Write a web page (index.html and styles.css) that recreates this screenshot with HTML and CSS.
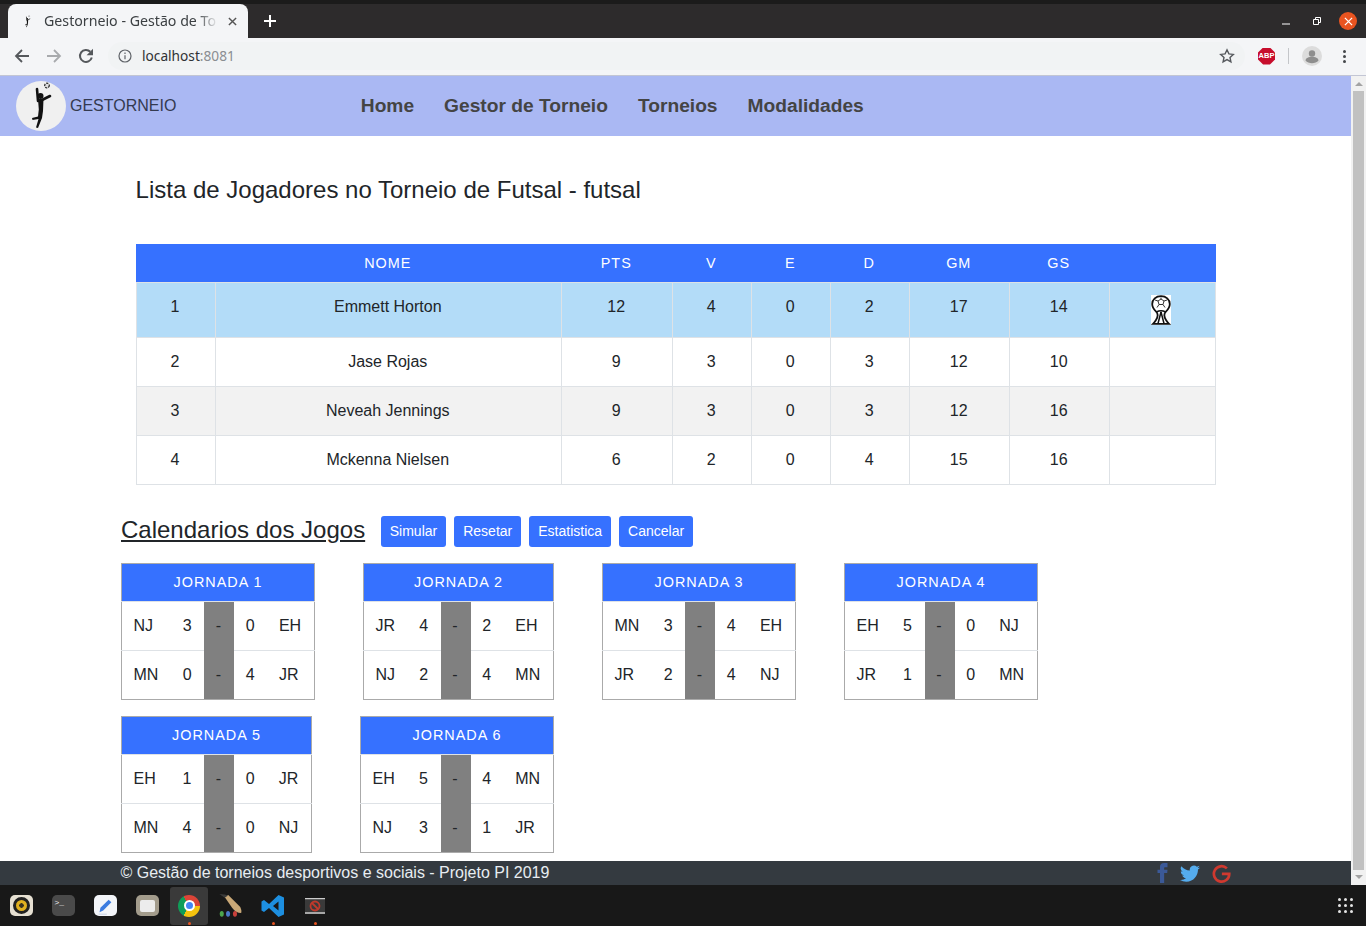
FILE: index.html
```html
<!DOCTYPE html>
<html>
<head>
    <title>Gestorneio - Gestão de Torneios</title>
    <link rel="stylesheet" href="styles.css">
</head>
<body>
    <!-- browser window -->
    <div class="tab-bar">
        <div class="tab">
            <svg class="favicon" viewBox="0 0 50 50"><use href="#player"/></svg>
            <span class="tab-title">Gestorneio - Gestão de To</span>
            <svg class="tab-close" viewBox="0 0 10 10"><path d="M1 1l8 8M9 1l-8 8"/></svg>
        </div>
        <svg class="new-tab" viewBox="0 0 12 12"><path d="M6 0v12M0 6h12"/></svg>
        <div class="window-controls">
            <svg class="win-icon" viewBox="0 0 10 10"><path d="M1 8h8"/></svg>
            <svg class="win-icon" viewBox="0 0 10 10"><path d="M1.500 3.500h5v5h-5zM3.500 3V1.500h5v5H7"/></svg>
            <span class="win-close"><svg viewBox="0 0 10 10"><path d="M1 1l8 8M9 1l-8 8"/></svg></span>
        </div>
    </div>
    <div class="toolbar">
        <svg class="nav-icon" viewBox="0 0 16 16"><path d="M15 8H2M8 2L2 8l6 6"/></svg>
        <svg class="nav-icon off" viewBox="0 0 16 16"><path d="M1 8h13M8 2l6 6-6 6"/></svg>
        <svg class="nav-icon reload" viewBox="0 0 16 16"><path d="M13.800 9.500A6 6 0 1 1 12.300 3.700"/><path class="solid" d="M15 .8v6.400H8.600z"/></svg>
        <div class="address">
            <svg class="info-icon" viewBox="0 0 14 14"><circle cx="7" cy="7" r="6"/><path d="M7 6.200v4M7 3.500v1.500"/></svg>
            <span class="host">localhost<span class="port">:8081</span></span>
            <svg class="star" viewBox="0 0 16 16"><path d="M8 1.800l1.900 4.100 4.400.5-3.300 3 .9 4.400L8 11.600l-3.900 2.200.9-4.400-3.300-3 4.400-.5z"/></svg>
        </div>
        <div class="abp"><span>ABP</span></div>
        <div class="tool-sep"></div>
        <svg class="avatar" viewBox="0 0 20 20"><circle cx="10" cy="10" r="10" fill="#dcdcdc"/><circle cx="10" cy="7.500" r="3.200" fill="#8e8e8e"/><path d="M3.500 14.500c0-2.600 3.500-3.800 6.500-3.800s6.500 1.200 6.500 3.800c-1.500 1.800-4 2.800-6.500 2.800s-5-1-6.500-2.800z" fill="#8e8e8e"/></svg>
        <div class="menu-dots"><i></i><i></i><i></i></div>
    </div>

    <div class="viewport">
        <div class="page">
            <nav class="navbar">
                <div class="logo">
                    <svg viewBox="0 0 50 50">
                        <defs>
                            <g id="player">
                                <circle cx="31" cy="4.500" r="2.300" fill="#ddd" stroke="#222" stroke-width="1.200" stroke-dasharray="2 1"/>
                                <path d="M21 8l1 12M34 15l-9 4.500" stroke="#111" stroke-width="2.600" fill="none" stroke-linecap="round"/>
                                <circle cx="24.500" cy="15" r="3" fill="#111"/>
                                <path d="M22 18h5.500l-.5 12-1 7-4 10-2-.5 2.500-8.500-6 1-.5-2 6-1.500.8-7z" fill="#111"/>
                            </g>
                        </defs>
                        <use href="#player"/>
                    </svg>
                </div>
                <span class="brand">GESTORNEIO</span>
                <div class="nav-links">
                    <a href="#">Home</a>
                    <a href="#">Gestor de Torneio</a>
                    <a href="#">Torneios</a>
                    <a href="#">Modalidades</a>
                </div>
            </nav>

            <main class="content">
                <h1 class="page-title">Lista de Jogadores no Torneio de Futsal - futsal</h1>

                <table class="standings">
                    <colgroup>
                        <col class="c-pos"><col class="c-name"><col class="c-pts"><col class="c-num"><col class="c-num"><col class="c-num"><col class="c-goal"><col class="c-goal"><col class="c-cup">
                    </colgroup>
                    <thead>
                        <tr><th></th><th>NOME</th><th>PTS</th><th>V</th><th>E</th><th>D</th><th>GM</th><th>GS</th><th></th></tr>
                    </thead>
                    <tbody>
                        <tr class="winner">
                            <td>1</td><td>Emmett Horton</td><td>12</td><td>4</td><td>0</td><td>2</td><td>17</td><td>14</td>
                            <td>
                                <svg class="trophy" viewBox="0 0 20 30">
                                    <rect width="20" height="30" fill="#fff"/>
                                    <path d="M10 1.200C5 1.200 1.200 4.500 1.200 9c0 4 2.300 6 4.300 8 1.500 2 1.500 5-.5 8-1 1.600-2 2.800-3 3.800h16c-1-1-2-2.200-3-3.800-2-3-2-6-.5-8 2-2 4.300-4 4.300-8 0-4.500-3.800-7.800-8.800-7.800z" fill="#fff" stroke="#111" stroke-width="1.800"/>
                                    <path d="M10 4l3 2-1 3.500H8L7 6zM10 4V2.500M13 6l3-1M12 9.500l2 3M8 9.500l-2 3M7 6L4 5" fill="none" stroke="#333" stroke-width="1"/>
                                    <path d="M5.500 17c2.500-1.500 6.500-1.500 9 0M10 17l-3 11.500M10 17l3 11.500" fill="none" stroke="#111" stroke-width="1.500"/>
                                </svg>
                            </td>
                        </tr>
                        <tr><td>2</td><td>Jase Rojas</td><td>9</td><td>3</td><td>0</td><td>3</td><td>12</td><td>10</td><td></td></tr>
                        <tr class="striped"><td>3</td><td>Neveah Jennings</td><td>9</td><td>3</td><td>0</td><td>3</td><td>12</td><td>16</td><td></td></tr>
                        <tr><td>4</td><td>Mckenna Nielsen</td><td>6</td><td>2</td><td>0</td><td>4</td><td>15</td><td>16</td><td></td></tr>
                    </tbody>
                </table>

                <div class="games-head">
                    <h2>Calendarios dos Jogos</h2>
                    <button>Simular</button>
                    <button>Resetar</button>
                    <button>Estatistica</button>
                    <button>Cancelar</button>
                </div>

                <div class="rounds">
                    <div class="round-row">
                        <table class="round">
                            <tr><th colspan="5">JORNADA 1</th></tr>
                            <tr><td>NJ</td><td>3</td><td class="dash">-</td><td>0</td><td>EH</td></tr>
                            <tr><td>MN</td><td>0</td><td class="dash">-</td><td>4</td><td>JR</td></tr>
                        </table>
                        <table class="round narrow">
                            <tr><th colspan="5">JORNADA 2</th></tr>
                            <tr><td>JR</td><td>4</td><td class="dash">-</td><td>2</td><td>EH</td></tr>
                            <tr><td>NJ</td><td>2</td><td class="dash">-</td><td>4</td><td>MN</td></tr>
                        </table>
                        <table class="round">
                            <tr><th colspan="5">JORNADA 3</th></tr>
                            <tr><td>MN</td><td>3</td><td class="dash">-</td><td>4</td><td>EH</td></tr>
                            <tr><td>JR</td><td>2</td><td class="dash">-</td><td>4</td><td>NJ</td></tr>
                        </table>
                        <table class="round">
                            <tr><th colspan="5">JORNADA 4</th></tr>
                            <tr><td>EH</td><td>5</td><td class="dash">-</td><td>0</td><td>NJ</td></tr>
                            <tr><td>JR</td><td>1</td><td class="dash">-</td><td>0</td><td>MN</td></tr>
                        </table>
                    </div>
                    <div class="round-row">
                        <table class="round narrow">
                            <tr><th colspan="5">JORNADA 5</th></tr>
                            <tr><td>EH</td><td>1</td><td class="dash">-</td><td>0</td><td>JR</td></tr>
                            <tr><td>MN</td><td>4</td><td class="dash">-</td><td>0</td><td>NJ</td></tr>
                        </table>
                        <table class="round">
                            <tr><th colspan="5">JORNADA 6</th></tr>
                            <tr><td>EH</td><td>5</td><td class="dash">-</td><td>4</td><td>MN</td></tr>
                            <tr><td>NJ</td><td>3</td><td class="dash">-</td><td>1</td><td>JR</td></tr>
                        </table>
                    </div>
                </div>
            </main>

            <footer class="footer">
                <span>© Gestão de torneios desportivos e sociais - Projeto PI 2019</span>
                <div class="social">
                    <svg class="fb" viewBox="6 0 12 24"><path d="M9 8H6v4h3v12h5V12h3.642L18 8h-4V6.333C14 5.378 14.192 5 15.115 5H18V0h-3.808C10.596 0 9 1.583 9 4.615V8z"/></svg>
                    <svg class="tw" viewBox="0 0 16 16"><path d="M5.026 15c6.038 0 9.341-5.003 9.341-9.334 0-.14 0-.282-.006-.422A6.685 6.685 0 0 0 16 3.542a6.658 6.658 0 0 1-1.889.518 3.301 3.301 0 0 0 1.447-1.817 6.533 6.533 0 0 1-2.087.793A3.286 3.286 0 0 0 7.875 6.030a9.325 9.325 0 0 1-6.767-3.429 3.289 3.289 0 0 0 1.018 4.382A3.323 3.323 0 0 1 .64 6.575v.045a3.288 3.288 0 0 0 2.632 3.218 3.203 3.203 0 0 1-.865.115 3.230 3.230 0 0 1-.614-.057 3.283 3.283 0 0 0 3.067 2.277A6.588 6.588 0 0 1 .78 13.580a6.320 6.320 0 0 1-.78-.045A9.344 9.344 0 0 0 5.026 15z"/></svg>
                    <svg class="gp" viewBox="0 0 24 24"><path d="M18.800 5.500A9.700 9.700 0 1 0 21.800 12.500H12.500"/></svg>
                </div>
            </footer>
        </div>
        <div class="scrollbar">
            <span class="arrow up"></span>
            <div class="thumb"></div>
            <span class="arrow down"></span>
        </div>
    </div>

    <!-- desktop dock -->
    <div class="dock">
        <div class="dock-item">
            <span class="app rhythm"><i></i></span>
        </div>
        <div class="dock-item">
            <span class="app term">&gt;_</span>
        </div>
        <div class="dock-item">
            <span class="app editor"><svg viewBox="0 0 22 22"><path d="M5 18l1-5L15 4l3 3-9 9z" fill="#3b7be0"/><path d="M4 20h9" stroke="#c5cde0" stroke-width="1"/></svg></span>
        </div>
        <div class="dock-item">
            <span class="app files"><i></i></span>
        </div>
        <div class="dock-item active">
            <span class="chrome-logo"><i></i></span>
            <b class="running"></b>
        </div>
        <div class="dock-item">
            <svg class="dock-svg" viewBox="0 0 26 26">
                <path d="M6 3l4-2 13 13c1.500 3 1.500 5 1 6.500-4 0-7-2-10-6z" fill="#c9a877"/><path d="M.5 0l6 .5 3 1.500-3.500 2z" fill="#3a3a3a"/>
                <ellipse cx="3" cy="21.500" rx="2.200" ry="3.200" fill="#4da64d"/><ellipse cx="9.800" cy="21.500" rx="2.200" ry="3.200" fill="#4a79c9"/><ellipse cx="17.300" cy="21.500" rx="2.200" ry="3.200" fill="#c9403a"/>
            </svg>
        </div>
        <div class="dock-item">
            <svg class="dock-svg" viewBox="0 0 24 24">
                <path d="M17.500 1L23 3.500v17L17.500 23 8 14l-5 4-2.500-1.500v-9L3 6l5 4zM17.500 7.500L12 12l5.500 4.500z" fill="#1d8fe0"/>
            </svg>
            <b class="running"></b>
        </div>
        <div class="dock-item">
            <svg class="screen" viewBox="0 0 20 16">
                <rect width="20" height="16" fill="#3a3a3a"/>
                <path d="M0 .5h20M0 15h20" stroke="#ccc" stroke-width="1.500"/>
                <circle cx="10" cy="8" r="4.500" fill="none" stroke="#c0392b" stroke-width="1.800"/>
                <path d="M7 5l6 6" stroke="#c0392b" stroke-width="1.800"/>
            </svg>
            <b class="running"></b>
        </div>
        <div class="apps-grid">
            <i></i><i></i><i></i><i></i><i></i><i></i><i></i><i></i><i></i>
        </div>
    </div>
</body>
</html>
```

FILE: styles.css
```css
* {
    box-sizing: border-box;
}
html, body {
    margin: 0;
    height: 926px;
    overflow: hidden;
}
body {
    display: flex;
    flex-direction: column;
    font-family: "Liberation Sans", Arial, sans-serif;
    font-size: 16px;
    line-height: 24px;
    color: #212529;
    background: #fff;
}

/* browser chrome */
.tab-bar {
    height: 38px;
    flex: none;
    display: flex;
    align-items: flex-end;
    padding-left: 8px;
    background: #2d2b2c;
    border-top: 4px solid #1b1b1b;
}
.tab {
    width: 240px;
    height: 34px;
    display: flex;
    align-items: center;
    padding: 0 11px 0 13px;
    background: #f4f5f7;
    border-radius: 8px 8px 0 0;
    font-family: "Noto Sans", sans-serif;
    font-size: 14.2px;
    color: #3c4043;
}
.favicon {
    width: 13px;
    height: 13px;
    flex: none;
    margin-right: 10px;
}
.tab-title {
    width: 174px;
    flex: none;
    overflow: hidden;
    white-space: nowrap;
    -webkit-mask-image: linear-gradient(to right, #000 88%, transparent);
    mask-image: linear-gradient(to right, #000 88%, transparent);
}
.tab-close {
    width: 9px;
    height: 9px;
    margin-left: auto;
    stroke: #555;
    stroke-width: 1.6;
}
.new-tab {
    width: 12px;
    height: 12px;
    margin: 0 0 11px 16px;
    stroke: #fff;
    stroke-width: 2;
}
.window-controls {
    margin-left: auto;
    height: 34px;
    display: flex;
    align-items: center;
    padding-right: 9px;
    gap: 21px;
}
.win-icon {
    width: 10px;
    height: 10px;
    fill: none;
    stroke: #fff;
    stroke-width: 1;
}
.win-close {
    width: 18px;
    height: 18px;
    margin-left: -4px;
    display: flex;
    align-items: center;
    justify-content: center;
    border-radius: 50%;
    background: #e95420;
}
.win-close svg {
    width: 9px;
    height: 9px;
    stroke: #fff;
    stroke-width: 1.4;
}
.toolbar {
    height: 38px;
    flex: none;
    display: flex;
    align-items: center;
    padding: 0 0 1px 14px;
    background: #f4f5f7;
    border-bottom: 1px solid #c3c6d4;
}
.nav-icon {
    width: 16px;
    height: 16px;
    margin-right: 16px;
    fill: none;
    stroke: #55585c;
    stroke-width: 1.800;
}
.nav-icon.off {
    stroke: #a8aaad;
}
.nav-icon.reload {
    stroke-width: 2;
}
.nav-icon .solid {
    fill: #55585c;
    stroke: none;
}
.address {
    width: 1137px;
    height: 28px;
    margin-left: -2px;
    display: flex;
    align-items: center;
    padding: 0 10px;
    background: #f1f3f4;
    border-radius: 14px;
}
.info-icon {
    width: 14px;
    height: 14px;
    fill: none;
    stroke: #5f6368;
    stroke-width: 1.200;
}
.host {
    margin-left: 10px;
    font-family: "Noto Sans", sans-serif;
    font-size: 13.7px;
    color: #303235;
}
.port {
    color: #8a8d91;
}
.star {
    width: 16px;
    height: 16px;
    margin-left: auto;
    fill: none;
    stroke: #55585c;
    stroke-width: 1.400;
}
.abp {
    width: 17px;
    height: 17px;
    margin-left: 13px;
    display: flex;
    align-items: center;
    justify-content: center;
    background: #c70d2c;
    clip-path: polygon(30% 0, 70% 0, 100% 30%, 100% 70%, 70% 100%, 30% 100%, 0 70%, 0 30%);
    font-size: 7.5px;
    line-height: 1;
    font-weight: bold;
    color: #fff;
}
.tool-sep {
    width: 1px;
    height: 16px;
    margin-left: 13px;
    background: #c4c6c9;
}
.avatar {
    width: 20px;
    height: 20px;
    margin-left: 13px;
}
.menu-dots {
    margin-left: 21px;
    display: flex;
    flex-direction: column;
    gap: 2px;
}
.menu-dots i {
    width: 3px;
    height: 3px;
    background: #44474a;
    border-radius: 50%;
}

/* page */
.viewport {
    height: 809px;
    flex: none;
    display: flex;
}
.page {
    flex: 1;
    min-width: 0;
    display: flex;
    flex-direction: column;
}
.navbar {
    height: 60px;
    flex: none;
    display: flex;
    align-items: center;
    padding-left: 16px;
    background: #aab8f3;
}
.logo {
    width: 50px;
    height: 50px;
    border-radius: 50%;
    background: #f0f0f0;
}
.logo svg {
    display: block;
}
.brand {
    margin-left: 4px;
    color: #343a50;
}
.nav-links {
    margin-left: 184.4px;
    display: flex;
    gap: 30px;
}
.nav-links a {
    font-size: 19.2px;
    font-weight: bold;
    color: #444;
    text-decoration: none;
}
.content {
    flex: 1;
    min-height: 0;
    padding: 40px 0 0 121px;
}
.page-title {
    margin: 0 0 40px 14.6px;
    font-size: 24px;
    line-height: 28px;
    font-weight: normal;
}

/* standings table */
.standings {
    width: 1080px;
    margin-left: 15px;
    table-layout: fixed;
    border-collapse: collapse;
    text-align: center;
}
.c-pos { width: 79px; }
.c-name { width: 346px; }
.c-pts { width: 111px; }
.c-num { width: 79px; }
.c-goal { width: 100px; }
.c-cup { width: 107px; }
.standings th {
    height: 38px;
    padding: 0 .5px 0 0;
    background: #3671ff;
    color: #fff;
    font-size: 14.4px;
    font-weight: normal;
    letter-spacing: 1px;
}
.standings td {
    padding: 12px 12.5px 12px 12px;
    border: 1px solid #dee2e6;
    vertical-align: top;
}
.standings td:first-child {
    border-left: none;
    box-shadow: inset 1px 0 #dee2e6;
}
.standings td:last-child {
    border-right: none;
    box-shadow: inset -1px 0 #dee2e6;
}
.winner td {
    background: #b3dcf8;
}
.striped td {
    background: #f2f2f2;
}
.trophy {
    display: block;
    width: 20px;
    height: 30px;
    margin-left: 29px;
}

/* games */
.games-head {
    height: 31px;
    margin-top: 31px;
    display: flex;
    align-items: center;
    gap: 8px;
}
.games-head h2 {
    margin: 0 7.6px 2px 0;
    font-size: 24px;
    line-height: 28px;
    font-weight: normal;
    text-decoration: underline;
}
.games-head button {
    height: 31px;
    padding: 0 9px;
    border: none;
    border-radius: 3px;
    background: #3671ff;
    color: #fff;
    font-family: inherit;
    font-size: 14px;
}
.rounds {
    margin-top: 16px;
    display: flex;
    flex-direction: column;
    gap: 16px;
}
.round-row {
    display: flex;
    gap: 48px;
}
.round {
    width: 194px;
    border-collapse: collapse;
    border: 1px solid #aaa;
}
.round.narrow {
    width: 191px;
}
.round th {
    height: 38px;
    padding: 0;
    background: #3671ff;
    color: #fff;
    font-size: 14.4px;
    font-weight: normal;
    letter-spacing: 1px;
}
.round td {
    padding: 12px 12.5px 12px 11.5px;
    border-top: 1px solid #dee2e6;
}
.round .dash {
    width: 30px;
    background: #808080;
}
.round tr + tr + tr .dash {
    border-top-color: #808080;
}

/* footer */
.footer {
    height: 24px;
    flex: none;
    display: flex;
    align-items: center;
    justify-content: space-between;
    padding: 0 120px 0 120.5px;
    background: #343a40;
    color: #e8edf2;
}
.social {
    display: flex;
    align-items: center;
    gap: 12px;
}
.fb {
    width: 11px;
    height: 20px;
    fill: #3b5998;
}
.tw {
    width: 20px;
    height: 20px;
    fill: #55acee;
}
.gp {
    width: 19px;
    height: 19px;
    fill: none;
    stroke: #d0392f;
    stroke-width: 3.400;
}

/* scrollbar */
.scrollbar {
    width: 15px;
    flex: none;
    display: flex;
    flex-direction: column;
    align-items: center;
    background: #f1f1f1;
}
.thumb {
    width: 11px;
    flex: 1;
    background: #c1c1c1;
}
.arrow {
    flex: none;
    height: 0;
    border-left: 4px solid transparent;
    border-right: 4px solid transparent;
}
.arrow.up {
    margin: 6px 0 5px;
    border-bottom: 4px solid #a3a3a3;
}
.arrow.down {
    margin: 5px 0 6px;
    border-top: 4px solid #a3a3a3;
}

/* dock */
.dock {
    flex: 1;
    display: flex;
    align-items: center;
    background: #181818;
}
.dock-item {
    position: relative;
    width: 42px;
    height: 38px;
    display: flex;
    align-items: center;
    justify-content: center;
}
.dock-item.active {
    width: 38px;
    margin: 0 2px;
    background: #3a3a3a;
    border-radius: 3px;
}
.running {
    position: absolute;
    left: 50%;
    bottom: 0;
    width: 3px;
    height: 3px;
    margin-left: -1px;
    border-radius: 50%;
    background: #e95420;
}
.app {
    width: 23px;
    height: 21px;
    display: flex;
    align-items: center;
    justify-content: center;
    border-radius: 5px;
}
.rhythm {
    background: #e6e0d2;
}
.rhythm i {
    width: 17px;
    height: 17px;
    border-radius: 50%;
    background: radial-gradient(circle, #3a3320 0 2px, #e0b020 2.500px);
    border: 3px solid #222;
}
.term {
    background: #4a4a4a;
    color: #eee;
    font-family: "Liberation Mono", monospace;
    font-size: 8px;
    line-height: 1;
    justify-content: flex-start;
    align-items: flex-start;
    padding: 4px 0 0 3px;
}
.editor {
    background: #f3f5f9;
}
.editor svg {
    width: 20px;
    height: 20px;
}
.files {
    background: #a39c8c;
}
.files i {
    width: 15px;
    height: 12px;
    border-radius: 2px;
    background: #ececec;
}
.chrome-logo {
    width: 22px;
    height: 22px;
    display: flex;
    align-items: center;
    justify-content: center;
    border-radius: 50%;
    background: conic-gradient(from -30deg, #db4437 0 120deg, #f4c20d 120deg 240deg, #0f9d58 240deg 360deg);
}
.chrome-logo i {
    width: 11px;
    height: 11px;
    border-radius: 50%;
    background: #4285f4;
    border: 2px solid #fff;
}
.dock-svg {
    width: 24px;
    height: 24px;
}
.screen {
    width: 20px;
    height: 16px;
}
.apps-grid {
    margin-left: auto;
    margin-right: 13px;
    display: grid;
    grid-template-columns: repeat(3, 3px);
    gap: 3px;
}
.apps-grid i {
    height: 3px;
    background: #e4e4e4;
    border-radius: 50%;
}
```
